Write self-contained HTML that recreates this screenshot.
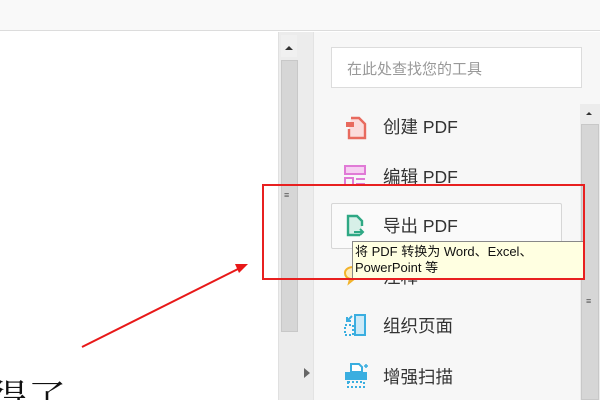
<!DOCTYPE html>
<html style="width:600px;height:400px;overflow:hidden"><head><meta charset="utf-8"><style>
*{margin:0;padding:0;box-sizing:border-box}
body{width:600px;height:400px;overflow:hidden;position:relative;background:#fff;font-family:"Liberation Sans","Noto Sans CJK SC",sans-serif}
.a{position:absolute}
.item{position:absolute;left:383px;font-size:17.5px;color:#333;line-height:20px}
</style></head><body>
<div class="a" style="left:0;top:0;width:600px;height:31px;background:#f9f9f9;border-bottom:1px solid #dcdcdc"></div>
<div class="a" style="left:278px;top:32px;width:22px;height:368px;background:#ececec;border-left:1px solid #e0e0e0"></div>
<div class="a" style="left:281px;top:35px;width:16px;height:22px;background:#f0f0f0"></div>
<div class="a" style="left:285px;top:46px;width:0;height:0;border-left:4px solid transparent;border-right:4px solid transparent;border-bottom:4px solid #333"></div>
<div class="a" style="left:281px;top:60px;width:17px;height:272px;background:#d6d6d6;border:1px solid #c8c8c8"></div>
<div class="a" style="left:284px;top:193px;font-size:9px;color:#555;line-height:5px">≡</div>
<div class="a" style="left:300px;top:32px;width:13px;height:368px;background:#ececec"></div>
<div class="a" style="left:304px;top:368px;width:0;height:0;border-top:5px solid transparent;border-bottom:5px solid transparent;border-left:6px solid #666"></div>
<div class="a" style="left:313px;top:32px;width:287px;height:368px;background:#f7f7f7;border-left:1px solid #e3e3e3"></div>
<div class="a" style="left:331px;top:47px;width:251px;height:41px;background:#fff;border:1px solid #dcdcdc;font-size:15px;color:#999;padding:10px 0 0 15px">在此处查找您的工具</div>
<div class="a" style="left:580px;top:104px;width:20px;height:296px;background:#ececec"></div>
<div class="a" style="left:586px;top:112px;width:0;height:0;border-left:3px solid transparent;border-right:3px solid transparent;border-bottom:3px solid #333"></div>
<div class="a" style="left:581px;top:124px;width:18px;height:276px;background:#d6d6d6;border:1px solid #c8c8c8"></div>
<div class="a" style="left:586px;top:296px;font-size:9px;color:#555">≡</div>
<div class="a" style="left:331px;top:203px;width:231px;height:46px;background:#fafafa;border:1px solid #d6d6d6;border-radius:2px"></div>
<svg class="a" style="left:343px;top:115px" width="26" height="26"><path d="M8 3h8l6 6v14H6V14" fill="#fbdcdc" stroke="#e86a5e" stroke-width="2.4"/><rect x="3" y="7" width="8" height="5" fill="#e86a5e"/></svg>
<svg class="a" style="left:343px;top:163px" width="26" height="26"><rect x="2" y="3" width="20" height="8" fill="#f6d0f2" stroke="#e07ad6" stroke-width="2"/><rect x="2" y="15" width="8" height="7" fill="none" stroke="#e07ad6" stroke-width="2"/><path d="M13 16h9M13 21h9" stroke="#e07ad6" stroke-width="2"/></svg>
<svg class="a" style="left:343px;top:213px" width="26" height="26"><path d="M17 22H5V3h9l5 5v5" fill="#d7f0e8" stroke="#2fa884" stroke-width="2.4"/><path d="M11 19h9M17 16l3 3-3 3" fill="none" stroke="#2fa884" stroke-width="2"/></svg>
<svg class="a" style="left:342px;top:265px" width="26" height="26"><path d="M3 8c0-4 4-6 9-6s9 2 9 6-4 6-9 6l-5 4 1-4C5 13 3 11 3 8z" fill="#fdecc0" stroke="#f2b32b" stroke-width="2"/></svg>
<svg class="a" style="left:343px;top:313px" width="26" height="26"><rect x="12" y="2" width="10" height="20" fill="#cdeaf7" stroke="#3aaee0" stroke-width="2"/><rect x="2" y="12" width="8" height="10" fill="none" stroke="#3aaee0" stroke-width="2" stroke-dasharray="2 2"/><path d="M9 3L4 8M4 4v4h4" fill="none" stroke="#3aaee0" stroke-width="2"/></svg>
<svg class="a" style="left:343px;top:362px" width="28" height="28"><path d="M8 2h8l3 3v5H8z" fill="#fff" stroke="#3aaee0" stroke-width="2"/><rect x="2" y="10" width="22" height="8" fill="#3aaee0"/><path d="M5 20h16v5H5z" fill="none" stroke="#3aaee0" stroke-width="2" stroke-dasharray="2 2"/><path d="M23 2v4M21 4h4" stroke="#3aaee0" stroke-width="1.5"/></svg>
<div class="item" style="top:117px">创建 PDF</div>
<div class="item" style="top:167px">编辑 PDF</div>
<div class="item" style="top:216px">导出 PDF</div>
<div class="item" style="top:267px">注释</div>
<div class="item" style="top:316px">组织页面</div>
<div class="item" style="top:367px">增强扫描</div>
<div class="a" style="left:352px;top:241px;width:233px;height:39px;background:#ffffe1;border:1px solid #888;font-size:13px;color:#111;line-height:16px;padding:2px 0 0 2px">将 PDF 转换为 Word、Excel、<br>PowerPoint 等</div>
<div class="a" style="left:262px;top:184px;width:323px;height:96px;border:2px solid #e82020"></div>
<svg class="a" style="left:0;top:0" width="600" height="400"><line x1="82" y1="347" x2="240" y2="268" stroke="#e81818" stroke-width="2"/><path d="M248 264l-13 0 4 9z" fill="#e81818"/></svg>
<div class="a" style="left:0;top:0;width:278px;height:400px;overflow:hidden"><div class="a" style="left:-10px;top:374px;font-size:38px;color:#111;font-family:'Noto Serif CJK SC',serif;line-height:44px;white-space:nowrap">得了</div></div>
</body></html>
